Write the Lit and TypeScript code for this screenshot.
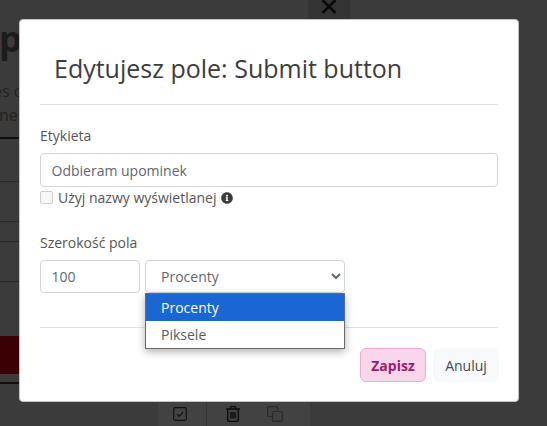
import { LitElement, html, css } from "lit";
import { customElement } from "lit/decorators.js";

@customElement("app-root")
export class AppRoot extends LitElement {
  static styles = css`
    :host {
      display: block;
      position: relative;
      width: 547px;
      height: 426px;
      overflow: hidden;
      background: #3b3b3b;
      font-family: "Open Sans", "Noto Sans", sans-serif;
      font-size: 14px;
      color: #495057;
    }
    * { box-sizing: border-box; }
    .page { height: 426px; display: flex; flex-direction: column; color: #1a1a1a; }
    .close-row { height: 25px; display: flex; padding-left: 308px; }
    .close-tile { width: 42px; height: 19px; background: #333; display: flex; justify-content: center; align-items: flex-start; }
    .close-tile svg { display: block; margin-top: -1px; }
    .heading { height: 36px; font-size: 36px; font-weight: 700; line-height: 28px; margin-left: -1px; color: #1c1c1c; }
    .sub { height: 24px; margin-top: 18px; font-size: 16px; line-height: 24px; margin-left: -7px; color: #222; white-space: nowrap; }
    .sub2 { height: 24px; font-size: 16px; line-height: 24px; margin-left: -1px; color: #222; }
    .rule-strong { height: 2px; background: #0e0e0e; width: 19px; margin-top: 10px; }
    .table { width: 19px; display: flex; flex-direction: column; }
    .r { border-bottom: 1px solid #262626; }
    .r1 { height: 43px; }
    .r2 { height: 40px; }
    .r3 { height: 20px; }
    .r4 { height: 40px; }
    .red { height: 38px; width: 19px; background: #3a0003; margin-top: 54px; }
    .rule-b { height: 2px; width: 19px; background: #0e0e0e; margin-top: 8px; }
    .toolbar {
      position: absolute; left: 158px; top: 402px; width: 152px; height: 24px;
      background: #424242; display: flex; align-items: center;
    }
    .tool { display: flex; justify-content: center; align-items: center; height: 100%; }
    .t1 { width: 49px; padding-right: 5px; border-right: 1px solid #353535; }
    .t2 { width: 52px; }
    .t3 { width: 32px; }
    .modal {
      position: absolute; left: 19px; top: 19px; width: 500px; height: 383px;
      background: #fff; border: 1px solid #c4c4c4; border-radius: 4px;
      padding: 0 20px; display: flex; flex-direction: column;
    }
    .title {
      margin: 0; height: 85px; padding: 28px 0 0 14px; font-size: 25px; font-weight: 400;
      line-height: 40px; color: #3d3d3d; border-bottom: 1px solid #dee2e6;
    }
    .label { margin-top: 21px; height: 20px; line-height: 20px; color: #555; }
    .input {
      display: block; width: 100%; height: 34px; border: 1px solid #ced4da; border-radius: 4px;
      padding: 0 10.5px; font: inherit; color: #5f666d; background: #fff; outline: none;
    }
    .name { margin-top: 7px; width: 458px; }
    .check { display: flex; align-items: center; height: 20px; color: #555; }
    .box { width: 13px; height: 13px; border: 1px solid #ccc; border-radius: 2px; background: #f8f8f8; margin-right: 5px; }
    .check svg { margin-left: 5px; margin-top: 1px; }
    .w-label { margin-top: 26px; }
    .w-row { display: flex; gap: 5px; margin-top: 7px; position: relative; }
    .num { width: 100px; height: 33px; }
    .sel {
      width: 200px; height: 33px; border: 1px solid #ced4da; border-radius: 4px; background: #fff;
      font: inherit; color: #5f666d; padding: 0 11px; outline: none;
    }
    .list {
      position: absolute; left: 105px; top: 33px; width: 200px; height: 56px; background: #fff;
      border: 1px solid #6b6b6b; box-shadow: 0 3px 8px rgba(0,0,0,.3); z-index: 2;
    }
    .opt { height: 27px; line-height: 27px; padding-left: 15px; color: #555c63; }
    .opt.on { background: #1a66d2; color: #fff; }
    .footer-rule { margin-top: 34px; height: 1px; background: #dee2e6; }
    .footer { display: flex; justify-content: flex-end; gap: 7px; margin-top: 20px; margin-right: -1px; }
    .btn { width: 66px; height: 34px; border-radius: 6px; font: inherit; border: 1px solid transparent; padding: 0; }
    .save { background: #f9d6ea; border-color: #f0a9d1; color: #a01a6c; font-weight: 700; }
    .cancel { background: #f8f9fa; border-color: #f8f9fa; color: #3f4a56; }
  `;

  render() {
    return html`
      <div class="page">
        <div class="close-row">
          <div class="close-tile">
            <svg width="16" height="16" viewBox="0 0 16 16">
              <path d="M1.5 1 L14.5 14 M14.5 1 L1.5 14" stroke="#0a0a0a" stroke-width="2.6" fill="none" />
            </svg>
          </div>
        </div>
        <div class="heading">p</div>
        <div class="sub">es c</div>
        <div class="sub2">ne</div>
        <div class="rule-strong"></div>
        <div class="table">
          <div class="r r1"></div>
          <div class="r r2"></div>
          <div class="r r3"></div>
          <div class="r r4"></div>
        </div>
        <div class="red"></div>
        <div class="rule-b"></div>
      </div>

      <div class="toolbar">
        <div class="tool t1">
          <svg width="14" height="14" viewBox="0 0 14 14" fill="none" stroke="#111" stroke-width="1.2">
            <rect x=".7" y=".7" width="12.6" height="12.6" rx="1.5" />
            <path d="M4 7.2 L6.2 9.2 L10.2 5" />
          </svg>
        </div>
        <div class="tool t2">
          <svg width="14" height="16" viewBox="0 0 14 16" fill="none" stroke="#0c0c0c" stroke-width="1.4">
            <path d="M0 3 H14 M4.5 3 V1.2 Q4.5 .6 5.2 .6 H8.8 Q9.5 .6 9.5 1.2 V3 M1.7 3 V14 Q1.7 15.4 3 15.4 H11 Q12.3 15.4 12.3 14 V3 M5 6 V12.5 M7 6 V12.5 M9 6 V12.5" />
          </svg>
        </div>
        <div class="tool t3">
          <svg width="16" height="16" viewBox="0 0 16 16" fill="none" stroke="#2a2a2a" stroke-width="1.2">
            <path d="M5 10.5 H1.5 Q.7 10.5 .7 9.7 V1.5 Q.7 .7 1.5 .7 H9.7 Q10.5 .7 10.5 1.5 V5" />
            <path d="M6 5.5 H14.5 Q15.3 5.5 15.3 6.3 V14.5 Q15.3 15.3 14.5 15.3 H6.3 Q5.5 15.3 5.5 14.5 V6" />
          </svg>
        </div>
      </div>

      <div class="modal">
        <h2 class="title">Edytujesz pole: Submit button</h2>
        <div class="label">Etykieta</div>
        <input class="input name" .value=${"Odbieram upominek"} />
        <div class="check">
          <span class="box"></span>
          <span>Użyj nazwy wyświetlanej</span>
          <svg width="12" height="12" viewBox="0 0 512 512">
            <path fill="#3c3c3c" d="M256 8C119 8 8 119 8 256s111 248 248 248 248-111 248-248S393 8 256 8zm0 110c23 0 42 19 42 42s-19 42-42 42-42-19-42-42 19-42 42-42zm56 254c0 7-5 12-12 12h-88c-7 0-12-5-12-12v-24c0-7 5-12 12-12h12v-64h-12c-7 0-12-5-12-12v-24c0-7 5-12 12-12h64c7 0 12 5 12 12v100h12c7 0 12 5 12 12v24z" />
          </svg>
        </div>
        <div class="label w-label">Szerokość pola</div>
        <div class="w-row">
          <input class="input num" .value=${"100"} />
          <select class="sel">
            <option>Procenty</option>
            <option>Piksele</option>
          </select>
          <div class="list">
            <div class="opt on">Procenty</div>
            <div class="opt">Piksele</div>
          </div>
        </div>
        <div class="footer-rule"></div>
        <div class="footer">
          <button class="btn save">Zapisz</button>
          <button class="btn cancel">Anuluj</button>
        </div>
      </div>
    `;
  }
}
